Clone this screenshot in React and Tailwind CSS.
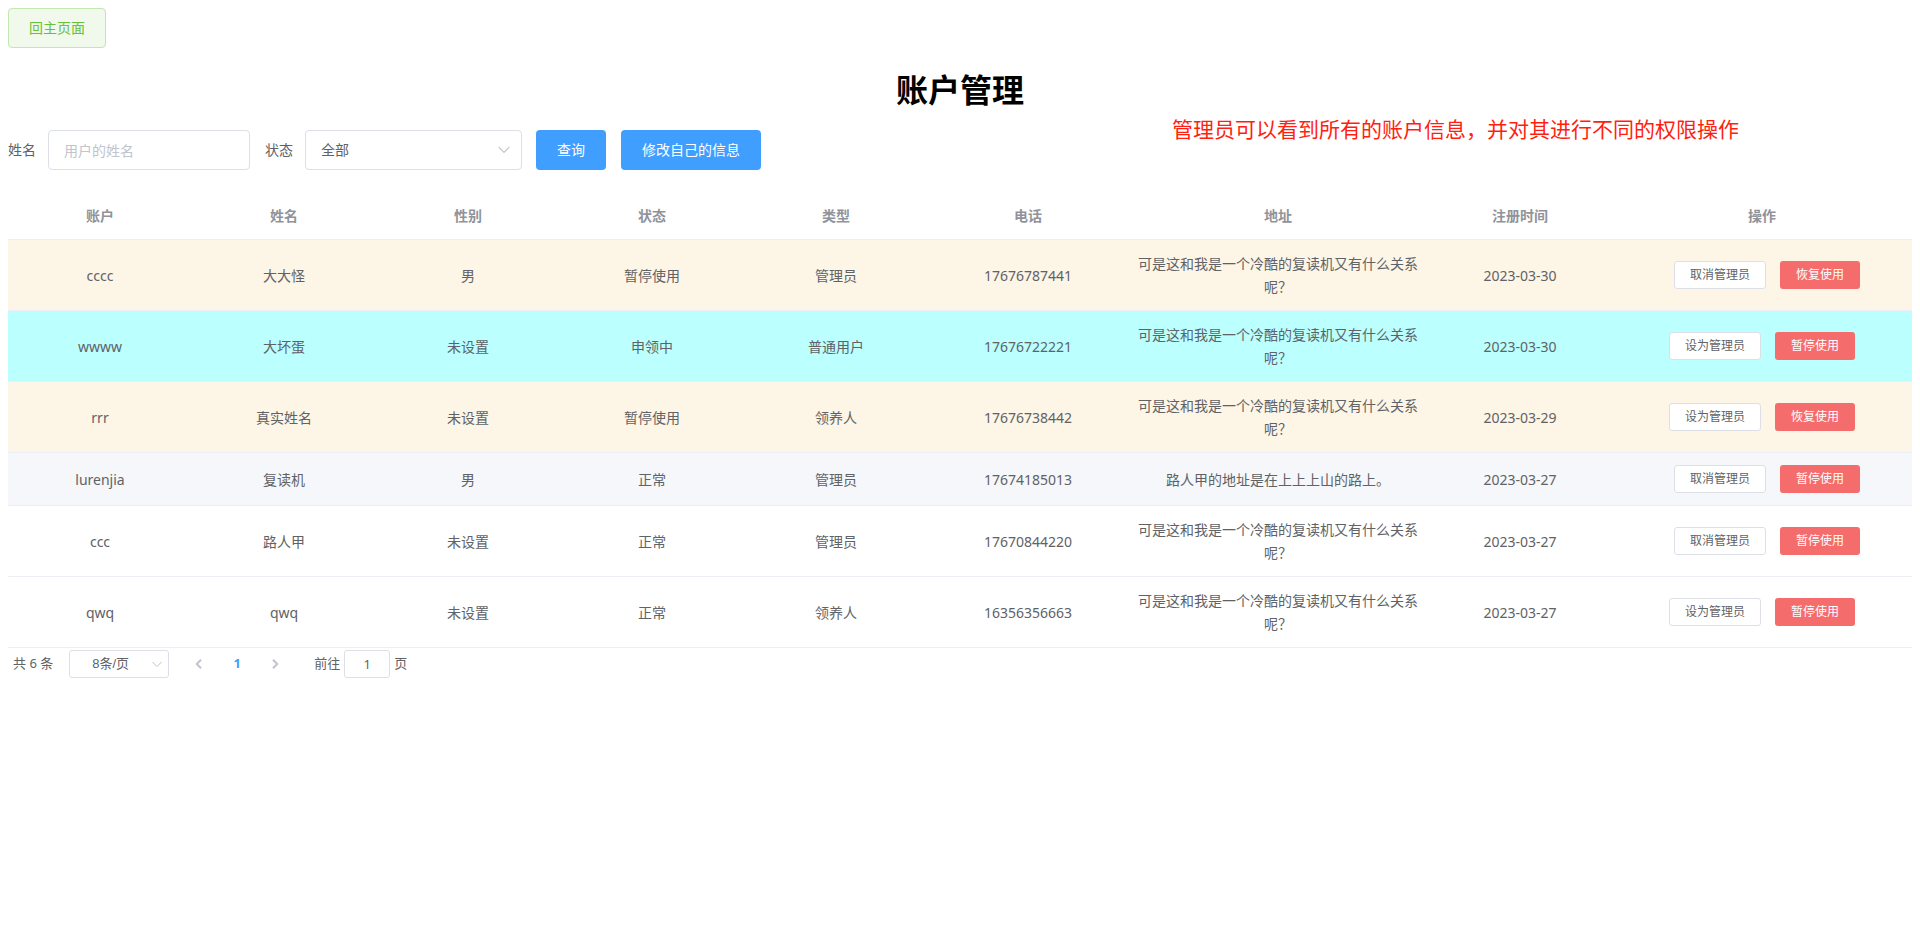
import { useState } from "react";

const LONG_ADDRESS = "可是这和我是一个冷酷的复读机又有什么关系呢？";

const accounts = [
  { account: "cccc", name: "大大怪", gender: "男", status: "暂停使用", type: "管理员", phone: "17676787441", address: LONG_ADDRESS, date: "2023-03-30", tone: "bg-[#fdf5e6]" },
  { account: "wwww", name: "大坏蛋", gender: "未设置", status: "申领中", type: "普通用户", phone: "17676722221", address: LONG_ADDRESS, date: "2023-03-30", tone: "bg-[#bbffff]" },
  { account: "rrr", name: "真实姓名", gender: "未设置", status: "暂停使用", type: "领养人", phone: "17676738442", address: LONG_ADDRESS, date: "2023-03-29", tone: "bg-[#fdf5e6]" },
  { account: "lurenjia", name: "复读机", gender: "男", status: "正常", type: "管理员", phone: "17674185013", address: "路人甲的地址是在上上上山的路上。", date: "2023-03-27", tone: "bg-[#f5f7fa]" },
  { account: "ccc", name: "路人甲", gender: "未设置", status: "正常", type: "管理员", phone: "17670844220", address: LONG_ADDRESS, date: "2023-03-27", tone: "bg-white" },
  { account: "qwq", name: "qwq", gender: "未设置", status: "正常", type: "领养人", phone: "16356356663", address: LONG_ADDRESS, date: "2023-03-27", tone: "bg-white" },
];

const columns = [
  { key: "account", title: "账户", width: "" },
  { key: "name", title: "姓名", width: "" },
  { key: "gender", title: "性别", width: "" },
  { key: "status", title: "状态", width: "" },
  { key: "type", title: "类型", width: "" },
  { key: "phone", title: "电话", width: "w-[200px]" },
  { key: "address", title: "地址", width: "w-[300px]" },
  { key: "date", title: "注册时间", width: "" },
];

function Chevron({ className, d, strokeWidth = 1 }) {
  return (
    <svg viewBox="0 0 12 12" fill="none" stroke="currentColor" strokeWidth={strokeWidth} className={className} aria-hidden="true">
      <path d={d} />
    </svg>
  );
}

function PrimaryButton({ children }) {
  return (
    <button type="button" className="h-10 cursor-pointer rounded bg-[#409eff] px-[21px] text-sm text-white">
      {children}
    </button>
  );
}

function SearchForm() {
  const [name, setName] = useState("");
  return (
    <form className="flex items-center text-sm text-[#606266]" onSubmit={(e) => e.preventDefault()}>
      <label htmlFor="name" className="pr-3">姓名</label>
      <input
        id="name"
        value={name}
        onChange={(e) => setName(e.target.value)}
        placeholder="用户的姓名"
        className="h-10 w-[202px] rounded border border-[#dcdfe6] px-[15px] outline-none placeholder:text-[#c0c4cc]"
      />
      <label htmlFor="status" className="pr-3 pl-[15px]">状态</label>
      <div className="relative mr-[14px]">
        <select id="status" className="block h-10 w-[217px] appearance-none rounded border border-[#dcdfe6] bg-white px-[15px] outline-none">
          <option>全部</option>
          <option>正常</option>
          <option>暂停使用</option>
          <option>申领中</option>
        </select>
        <Chevron d="M.8 3.2 6 8.400l5.200-5.200" strokeWidth={1.2} className="pointer-events-none absolute top-[14px] right-3 size-3 text-[#c0c4cc]" />
      </div>
      <div className="flex gap-[15px]">
        <PrimaryButton>查询</PrimaryButton>
        <PrimaryButton>修改自己的信息</PrimaryButton>
      </div>
    </form>
  );
}

function RowActions({ row }) {
  const isAdmin = row.type === "管理员";
  return (
    <div className={`flex justify-center gap-[14px] text-xs ${isAdmin ? "pl-[10px]" : ""}`}>
      <button type="button" className="h-7 cursor-pointer rounded-[3px] border border-[#dcdfe6] bg-white px-[15px] text-[#606266]">
        {isAdmin ? "取消管理员" : "设为管理员"}
      </button>
      <button type="button" className="h-7 cursor-pointer rounded-[3px] bg-[#f56c6c] px-4 text-white">
        {row.status === "暂停使用" ? "恢复使用" : "暂停使用"}
      </button>
    </div>
  );
}

function AccountTable() {
  return (
    <table className="w-full table-fixed border-separate border-spacing-0 text-center text-sm leading-[23px] text-[#606266]">
      <thead className="text-[#909399]">
        <tr>
          {columns.map((c) => (
            <th key={c.key} className={`border-b border-[#ebeef5] px-[10px] py-3 font-bold ${c.width}`}>{c.title}</th>
          ))}
          <th className="w-[300px] border-b border-[#ebeef5] px-[10px] py-3 font-bold">操作</th>
        </tr>
      </thead>
      <tbody>
        {accounts.map((row) => (
          <tr key={row.account} className={row.tone}>
            {columns.map((c) => (
              <td key={c.key} className="border-b border-[#ebeef5] px-[10px] py-3">{row[c.key]}</td>
            ))}
            <td className="border-b border-[#ebeef5] px-[10px] py-3">
              <RowActions row={row} />
            </td>
          </tr>
        ))}
      </tbody>
    </table>
  );
}

function Pagination() {
  const [page, setPage] = useState("1");
  return (
    <nav aria-label="分页" className="flex items-center px-[5px] pt-[2px] text-[13px] text-[#606266]">
      <span className="mr-4">共 6 条</span>
      <div className="relative mr-[11px]">
        <select
          aria-label="每页条数"
          className="block h-7 w-[100px] appearance-none rounded-[3px] border border-[#dcdfe6] bg-white pr-[25px] pl-2 text-center font-['Liberation_Sans','Noto_Sans_CJK_SC',sans-serif] outline-none"
        >
          <option>8条/页</option>
          <option>16条/页</option>
        </select>
        <Chevron d="M1.500 4 6 8.500 10.500 4" className="pointer-events-none absolute top-2 right-[6px] size-3 text-[#c0c4cc]" />
      </div>
      <button type="button" aria-label="上一页" disabled className="flex h-7 w-[38px] items-center justify-center text-[#c0c4cc]">
        <Chevron d="M8 1.800 3.800 6 8 10.200" strokeWidth={2} className="size-3" />
      </button>
      <button type="button" aria-current="page" className="h-7 w-[38px] cursor-pointer font-bold text-[#409eff]">1</button>
      <button type="button" aria-label="下一页" disabled className="flex h-7 w-[38px] items-center justify-center text-[#c0c4cc]">
        <Chevron d="M4 1.800 8.200 6 4 10.200" strokeWidth={2} className="size-3" />
      </button>
      <label htmlFor="page" className="ml-5">前往</label>
      <input
        id="page"
        value={page}
        onChange={(e) => setPage(e.target.value)}
        className="mx-1 h-7 w-[46px] rounded-[3px] border border-[#dcdfe6] text-center outline-none"
      />
      <span>页</span>
    </nav>
  );
}

export default function App() {
  return (
    <main className="bg-white p-2 font-['Noto_Sans','Noto_Sans_CJK_SC',sans-serif]">
      <button type="button" className="block h-10 cursor-pointer rounded border border-[#c2e7b0] bg-[#f0f9eb] px-5 text-sm text-[#67c23a]">
        回主页面
      </button>
      <h1 className="mt-5 mb-[18px] text-center text-[32px] leading-[44px] font-bold text-black">账户管理</h1>
      <div className="relative mb-[22px]">
        <SearchForm />
        <p className="absolute -top-[17px] right-[173px] text-[21px] leading-8 whitespace-nowrap text-[#ff1e10]">
          管理员可以看到所有的账户信息，并对其进行不同的权限操作
        </p>
      </div>
      <AccountTable />
      <Pagination />
    </main>
  );
}
